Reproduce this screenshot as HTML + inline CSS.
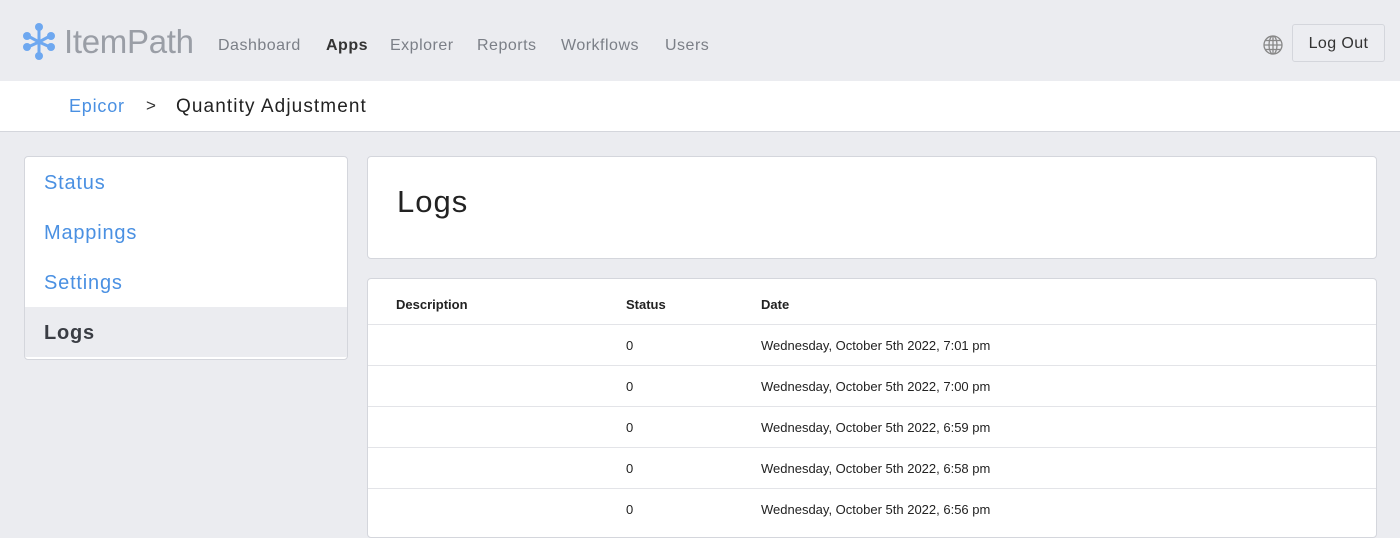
<!DOCTYPE html>
<html><head><style>
*{box-sizing:border-box;margin:0;padding:0}
body{width:1400px;height:525px;overflow:hidden;background:#ebecf0;font-family:"Liberation Sans",sans-serif;position:relative}
.hdr{position:absolute;left:0;top:0;width:1400px;height:81px;background:#ebecf0}
.logo{position:absolute;left:22px;top:22px}
.brand{position:absolute;left:64px;top:23px;font-size:33px;color:#9a9ea6;letter-spacing:-0.3px}
.nav{position:absolute;top:37px;font-size:16px;color:#7b7f87;letter-spacing:0.5px}
.bc{position:absolute;left:0;top:81px;width:1400px;height:51px;background:#fff;border-bottom:1px solid #d4d6dc}
.box{position:absolute;background:#fff;border:1px solid #d4d6dc;border-radius:4px}
.side a{display:block;height:50px;line-height:52px;padding-left:19px;font-size:20px;color:#4a90e2;letter-spacing:0.8px}
.th{position:absolute;font-size:13px;font-weight:bold;color:#222}
.row{position:absolute;left:0;width:1008px;height:41px;border-top:1px solid #e3e4e8;font-size:13px;color:#222}
.row span{position:absolute;top:13px}
</style></head><body>
<div class="hdr">
<svg class="logo" width="36" height="40" viewBox="0 0 36 40"><g stroke="#6ea8f0" stroke-width="3"><line x1="17" y1="6" x2="17" y2="20"/><line x1="6" y1="14" x2="17" y2="20"/><line x1="28" y1="14" x2="17" y2="20"/><line x1="6" y1="25" x2="17" y2="20"/><line x1="28" y1="25" x2="17" y2="20"/><line x1="17" y1="20" x2="17" y2="33"/></g><g fill="#6ea8f0"><circle cx="17" cy="5" r="4"/><circle cx="5" cy="14" r="4"/><circle cx="29" cy="14" r="4"/><circle cx="5" cy="25" r="4"/><circle cx="29" cy="25" r="4"/><circle cx="17" cy="34" r="4"/></g></svg>
<div class="brand">ItemPath</div>
<div class="nav" style="left:218px">Dashboard</div>
<div class="nav" style="left:326px;color:#333;font-weight:bold">Apps</div>
<div class="nav" style="left:390px">Explorer</div>
<div class="nav" style="left:477px">Reports</div>
<div class="nav" style="left:561px">Workflows</div>
<div class="nav" style="left:665px">Users</div>
<svg style="position:absolute;left:1263px;top:35px" width="20" height="20" viewBox="0 0 20 20" fill="none" stroke="#888" stroke-width="1.3"><circle cx="10" cy="10" r="9"/><ellipse cx="10" cy="10" rx="4" ry="9"/><line x1="1" y1="10" x2="19" y2="10"/><line x1="2.5" y1="5.5" x2="17.5" y2="5.5"/><line x1="2.5" y1="14.5" x2="17.5" y2="14.5"/><line x1="10" y1="1" x2="10" y2="19"/></svg>
<div style="position:absolute;left:1292px;top:24px;width:93px;height:38px;border:1px solid #d4d6dc;border-radius:3px;background:#ecedf1;font-size:16px;color:#333;text-align:center;line-height:37px;letter-spacing:0.4px">Log Out</div>
</div>
<div class="bc">
<span style="position:absolute;left:69px;top:15px;font-size:18px;color:#4a90e2;letter-spacing:0.8px">Epicor</span>
<span style="position:absolute;left:146px;top:15px;font-size:17px;color:#333">&gt;</span>
<span style="position:absolute;left:176px;top:15px;font-size:19px;color:#222;letter-spacing:1.1px">Quantity Adjustment</span>
</div>
<div class="box side" style="left:24px;top:156px;width:324px;height:204px;overflow:hidden">
<a>Status</a><a>Mappings</a><a>Settings</a><a style="background:#ebecf0;color:#3a3d44;font-weight:bold">Logs</a>
</div>
<div class="box" style="left:367px;top:156px;width:1010px;height:103px"><div style="position:absolute;left:29px;top:27px;font-size:31px;color:#222;letter-spacing:1px">Logs</div></div>
<div class="box" style="left:367px;top:278px;width:1010px;height:260px">
<div class="th" style="left:28px;top:18px">Description</div>
<div class="th" style="left:258px;top:18px">Status</div>
<div class="th" style="left:393px;top:18px">Date</div>
<div class="row" style="top:45px"><span style="left:258px">0</span><span style="left:393px">Wednesday, October 5th 2022, 7:01 pm</span></div>
<div class="row" style="top:86px"><span style="left:258px">0</span><span style="left:393px">Wednesday, October 5th 2022, 7:00 pm</span></div>
<div class="row" style="top:127px"><span style="left:258px">0</span><span style="left:393px">Wednesday, October 5th 2022, 6:59 pm</span></div>
<div class="row" style="top:168px"><span style="left:258px">0</span><span style="left:393px">Wednesday, October 5th 2022, 6:58 pm</span></div>
<div class="row" style="top:209px"><span style="left:258px">0</span><span style="left:393px">Wednesday, October 5th 2022, 6:56 pm</span></div>
</div>
</body></html>
